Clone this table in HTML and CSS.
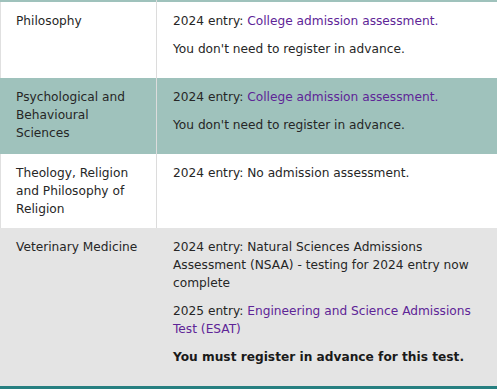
FILE: index.html
```html
<!DOCTYPE html>
<html lang="en">
<head>
<meta charset="utf-8">
<title>Admission assessments</title>
<link rel="stylesheet" href="styles.css">
</head>
<body>
<table class="tests">
  <tbody>
    <tr class="row-teal row-stub"><td class="subject"></td><td class="info"></td></tr>
    <tr class="row-white">
      <td class="subject">Philosophy</td>
      <td class="info">
        <p>2024 entry: <a href="#">College admission assessment.</a></p>
        <p>You don't need to register in advance.</p>
      </td>
    </tr>
    <tr class="row-teal">
      <td class="subject">Psychological and Behavioural Sciences</td>
      <td class="info">
        <p>2024 entry: <a href="#">College admission assessment.</a></p>
        <p>You don't need to register in advance.</p>
      </td>
    </tr>
    <tr class="row-white">
      <td class="subject">Theology, Religion and Philosophy of Religion</td>
      <td class="info">
        <p>2024 entry: No admission assessment.</p>
      </td>
    </tr>
    <tr class="row-grey">
      <td class="subject">Veterinary Medicine</td>
      <td class="info">
        <p>2024 entry: Natural Sciences Admissions Assessment (NSAA) - testing for 2024 entry now complete</p>
        <p>2025 entry: <a href="#">Engineering and Science Admissions Test (ESAT)</a></p>
        <p><strong>You must register in advance for this test.</strong></p>
      </td>
    </tr>
  </tbody>
</table>
</body>
</html>
```

FILE: styles.css
```css
html, body {
  margin: 0;
  padding: 0;
  background: #ffffff;
}

body {
  font-family: "DejaVu Sans", Verdana, sans-serif;
  font-size: 12.2px;
  line-height: 18px;
  color: #262626;
}

.tests {
  width: 497px;
  border-collapse: collapse;
  border-spacing: 0;
  border-bottom: 3px solid #267f80;
}

.tests td {
  vertical-align: top;
  padding: 10px 16px;
}

.tests .subject {
  width: 124px;
  padding-left: 16px;
  border-right: 1px solid #dcdcdc;
}

.row-white .subject {
  box-shadow: inset 1px 0 0 #e0e0e0;
}

.tests .info p {
  margin: 0 0 10px;
}

.row-white { background: #ffffff; }
.row-teal { background: #9fc2bc; }
.row-grey { background: #e4e4e4; }

.row-grey .subject {
  border-right-color: #e4e4e4;
}

.row-stub td {
  padding: 0;
  height: 2px;
}

a {
  color: #5e2597;
  text-decoration: none;
}

strong {
  font-weight: bold;
  color: #1a1a1a;
}
```
